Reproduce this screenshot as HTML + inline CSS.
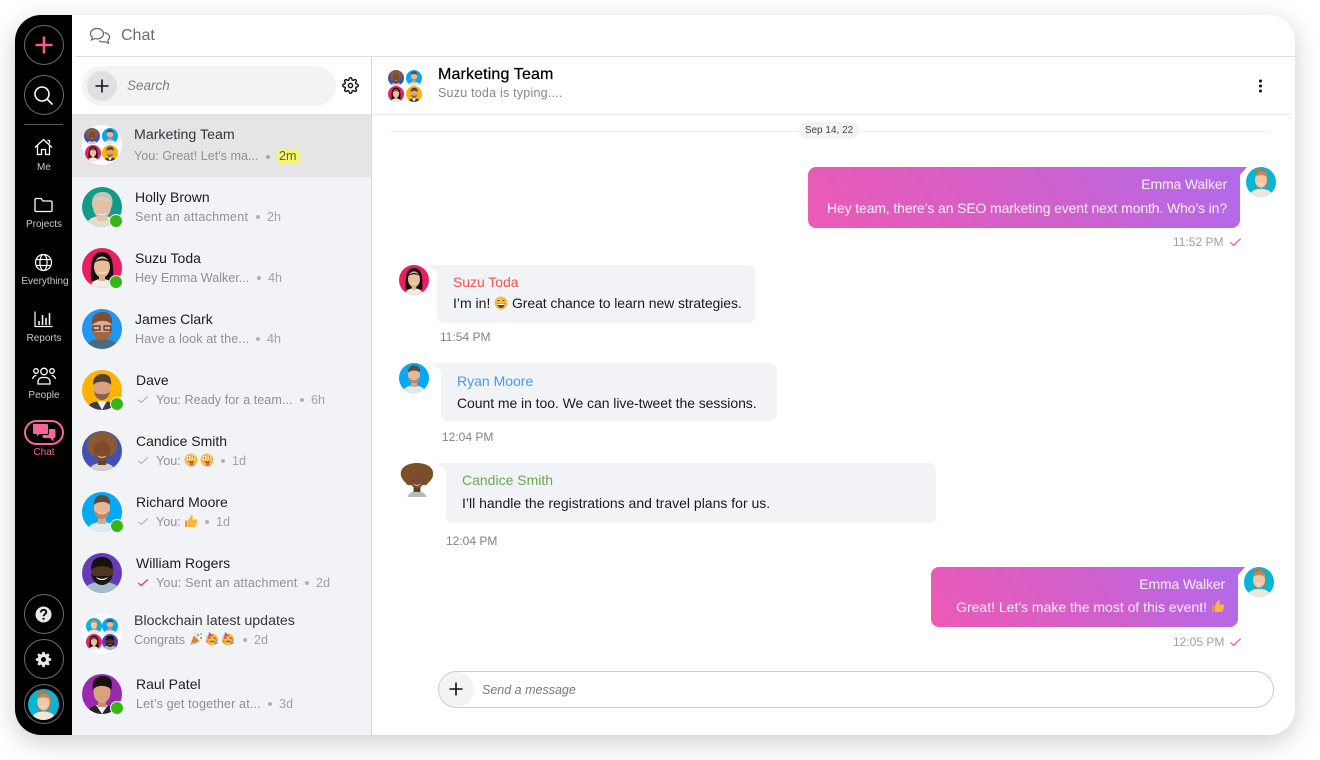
<!DOCTYPE html>
<html lang="en"><head><meta charset="utf-8"><title>Chat</title>
<style>
html,body{margin:0;padding:0;background:#fff;width:1320px;height:760px;overflow:hidden}
body{font-family:"Liberation Sans",sans-serif;position:relative}
#card{position:absolute;left:15px;top:15px;width:1280px;height:720px;border-radius:26px;background:#fff;box-shadow:0 7px 26px rgba(0,0,0,.2)}
#clip{position:absolute;left:0;top:0;width:1280px;height:720px;border-radius:26px;overflow:hidden}
.abs,.t,svg.i,svg.av{position:absolute}
#root{position:absolute;left:-15px;top:-15px;width:1320px;height:760px}
.t{white-space:nowrap;line-height:20px;height:20px}
.n{font-size:14px;color:#1d1d1f}
.s{font-size:12.6px;color:#8f9195}
.g{font-size:12.6px;color:#a0a2a6}
.l{font-size:10px;color:#c9c9c9;text-align:center;width:57px;left:15.5px}
.b{position:absolute;background:#f2f3f7;border-radius:7px}
.me{position:absolute;border-radius:8px 0 8px 8px;background:linear-gradient(58deg,#ec5ab5,#cf60cc 55%,#b06bec)}
.m{font-size:14px;color:#1b1b1d}
.w{font-size:14px;color:#fdeefc;text-align:right}
.tm{font-size:12px;color:#808285}
.ring{position:absolute;width:38px;height:38px;border:1px solid #6c6c6c;border-radius:50%;left:23.5px}
.on{position:absolute;width:12px;height:12px;border-radius:50%;background:#38b515;border:1.5px solid #f2f3f6}
</style></head><body>
<svg width="0" height="0" style="position:absolute"><defs>
<clipPath id="c"><circle cx="20" cy="20" r="20"/></clipPath>
<symbol id="holly" viewBox="0 0 40 40"><g clip-path="url(#c)"><rect width="40" height="40" fill="#109c89"/><path d="M4 40c1-9 8-11 16-11s15 2 16 11z" fill="#e6dccd"/><path d="M10 19C9 8 15 5 21 5s11 4 9 14l-1 2H11z" fill="#c8c3b8"/><ellipse cx="20" cy="20" rx="9" ry="11" fill="#e5c0a7"/><path d="M11 16c2-5 6-6 9-6s8 1 9 6c-5-4-12-4-18 0z" fill="#d3cec4"/><path d="M15 26c3 2 7 2 10 0-2 3-8 3-10 0z" fill="#fff"/><rect x="15" y="29" width="10" height="5" fill="#dcc9b2"/></g></symbol>
<symbol id="suzu" viewBox="0 0 40 40"><g clip-path="url(#c)"><rect width="40" height="40" fill="#e91e63"/><path d="M9 33C8 14 10 4 20 4s12 10 11 29z" fill="#141012"/><path d="M8 40c1-7 7-9 12-9s11 2 12 9z" fill="#efece6"/><ellipse cx="20" cy="19" rx="8" ry="10.500" fill="#e9bd98"/><rect x="17" y="26" width="6" height="7" fill="#e3b28d"/><path d="M15 23c3 2.500 7 2.500 10 0-2 3.500-8 3.500-10 0z" fill="#fff"/><path d="M12 15c3-5 12-7 16 0-3-3-11-4-16 0z" fill="#141012"/></g></symbol>
<symbol id="james" viewBox="0 0 40 40"><g clip-path="url(#c)"><rect width="40" height="40" fill="#2196f3"/><path d="M3 40c2-8 9-10 17-10s15 2 17 10z" fill="#4e6a7e"/><ellipse cx="20" cy="18" rx="10" ry="12.500" fill="#e3ad8c"/><path d="M10 20c1 8 5 11 10 11s9-3 10-11c-2 3-4 3-10 3s-8 0-10-3z" fill="#a9643a"/><path d="M10 16C9 6 15 3 21 3s10 4 9 13c-3-5-14-6-20 0z" fill="#7c5030"/><path d="M11 17h7v4h-7zM22 17h7v4h-7z" fill="none" stroke="#333" stroke-width="1.200"/></g></symbol>
<symbol id="dave" viewBox="0 0 40 40"><g clip-path="url(#c)"><rect width="40" height="40" fill="#ffb300"/><path d="M4 40c2-7 9-9 16-9s14 2 16 9z" fill="#3a3e42"/><path d="M15 31h10l-5 9z" fill="#eee"/><ellipse cx="20" cy="19" rx="8.500" ry="11" fill="#d9a27f"/><path d="M12 21c1 6 4 9 8 9s7-3 8-9c-2 3-4 3-8 3s-6 0-8-3z" fill="#8c6244"/><path d="M11 15C11 6 16 4 21 4s9 3 8 11c-3-4-13-5-18 0z" fill="#54402e"/></g></symbol>
<symbol id="candice" viewBox="0 0 40 40"><g clip-path="url(#c)"><rect width="40" height="40" fill="#3f51b5"/><path d="M20 1c10 0 15 6 15 13 0 6-3 9-6 11H11c-3-2-6-5-6-11C5 7 10 1 20 1z" fill="#8a5a32"/><path d="M7 40c1-6 7-8 13-8s12 2 13 8z" fill="#d3d1c9"/><rect x="16" y="26" width="8" height="8" fill="#6d4128"/><ellipse cx="20" cy="20" rx="8" ry="10" fill="#7d4a2c"/><path d="M15 24c3 2.500 7 2.500 10 0-2 3.500-8 3.500-10 0z" fill="#fff"/></g></symbol>
<symbol id="candice2" viewBox="0 0 40 40"><path d="M20 0c11 0 20 5 19 14-1 6-5 8-8 12H9C6 22 2 20 1 14 0 5 9 0 20 0z" fill="#7a5029"/><path d="M9 40c1-5 6-7 11-7s10 2 11 7z" fill="#b9bcb6"/><rect x="16" y="26" width="8" height="8" fill="#5d3821"/><ellipse cx="20" cy="20" rx="8" ry="10" fill="#7d4a2c"/><path d="M15 24c3 2.500 7 2.500 10 0-2 3.500-8 3.500-10 0z" fill="#fff"/></symbol>
<symbol id="richard" viewBox="0 0 40 40"><g clip-path="url(#c)"><rect width="40" height="40" fill="#03a9f4"/><path d="M4 40c2-8 9-10 16-10s14 2 16 10z" fill="#dfe9f0"/><rect x="16" y="25" width="8" height="7" fill="#dca888"/><ellipse cx="20" cy="16" rx="8" ry="10.500" fill="#e6b799"/><path d="M12 18c1 6 4 9 8 9s7-3 8-9c-2 3-4 3-8 3s-6 0-8-3z" fill="#b58a70"/><path d="M15 20c3 2 7 2 10 0-2 3-8 3-10 0z" fill="#fff"/><path d="M12 13c0-8 4-10 8-10s9 2 8 10c-3-4-12-4-16 0z" fill="#5d4a3c"/></g></symbol>
<symbol id="william" viewBox="0 0 40 40"><g clip-path="url(#c)"><rect width="40" height="40" fill="#673ab7"/><path d="M1 40c2-9 10-11 19-11s17 2 19 11z" fill="#a7bcc8"/><ellipse cx="20" cy="18" rx="11" ry="13" fill="#523425"/><path d="M9 17C9 7 14 4 20 4s11 3 11 13c-4-5-18-5-22 0z" fill="#16110e"/><path d="M9 20c1 8 6 12 11 12s10-4 11-12c-2 4-5 3-11 3s-9 1-11-3z" fill="#1d1512"/><path d="M14 24c4 2.500 8 2.500 12 0-2 4-10 4-12 0z" fill="#fff"/></g></symbol>
<symbol id="raul" viewBox="0 0 40 40"><g clip-path="url(#c)"><rect width="40" height="40" fill="#9c27b0"/><path d="M4 40c2-7 9-9 16-9s14 2 16 9z" fill="#22252a"/><path d="M14 31h12l-6 9z" fill="#f4f4f4"/><rect x="16" y="25" width="8" height="8" fill="#c48f6c"/><ellipse cx="20" cy="18" rx="8.500" ry="11" fill="#d7a27d"/><path d="M11 16C9 5 15 2 21 2s11 3 8 14c-2-5-15-6-18 0z" fill="#15110f"/></g></symbol>
<symbol id="emma" viewBox="0 0 40 40"><g clip-path="url(#c)"><rect width="40" height="40" fill="#06b6d4"/><path d="M13 3c9-4 18 3 17 15l-3 10H13z" fill="#a87e56"/><path d="M3 40c2-8 10-11 17-11s15 3 17 11z" fill="#efe8da"/><ellipse cx="20" cy="17" rx="8" ry="10.500" fill="#efc8ab"/><path d="M12 13c2-7 10-9 16-4 1 2 1 3 0 4-5-3-11-3-16 0z" fill="#b88d62"/><path d="M16 21c2.500 2 6 2 8 0-1.500 3-6.500 3-8 0z" fill="#fff"/></g></symbol>
<symbol id="gear" viewBox="0 0 24 24"><circle cx="12" cy="12" r="3"/><path d="M19.4 15a1.650 1.650 0 0 0 .33 1.820l.06.06a2 2 0 0 1 0 2.830 2 2 0 0 1-2.830 0l-.06-.06a1.650 1.650 0 0 0-1.820-.33 1.650 1.650 0 0 0-1 1.510V21a2 2 0 0 1-2 2 2 2 0 0 1-2-2v-.09A1.650 1.650 0 0 0 9 19.400a1.650 1.650 0 0 0-1.820.33l-.06.06a2 2 0 0 1-2.830 0 2 2 0 0 1 0-2.830l.06-.06a1.650 1.650 0 0 0 .33-1.820 1.650 1.650 0 0 0-1.510-1H3a2 2 0 0 1-2-2 2 2 0 0 1 2-2h.09A1.650 1.650 0 0 0 4.600 9a1.650 1.650 0 0 0-.33-1.820l-.06-.06a2 2 0 0 1 0-2.830 2 2 0 0 1 2.830 0l.06.06a1.650 1.650 0 0 0 1.820.33H9a1.650 1.650 0 0 0 1-1.510V3a2 2 0 0 1 2-2 2 2 0 0 1 2 2v.09a1.650 1.650 0 0 0 1 1.510 1.650 1.650 0 0 0 1.820-.33l.06-.06a2 2 0 0 1 2.830 0 2 2 0 0 1 0 2.830l-.06.06a1.650 1.650 0 0 0-.33 1.820V9a1.650 1.650 0 0 0 1.510 1H21a2 2 0 0 1 2 2 2 2 0 0 1-2 2h-.09a1.650 1.650 0 0 0-1.510 1z"/></symbol>
<symbol id="chk" viewBox="0 0 14 10"><path d="M1.500 5.500L5 8.500 12.500 1.500" fill="none" stroke="currentColor" stroke-width="1.400"/></symbol>
<symbol id="joy" viewBox="0 0 14 14"><circle cx="7" cy="7" r="6.500" fill="#f6bd45"/><path d="M3.500 4.500h2M8.500 4.500h2" stroke="#6b4a1e" stroke-width="1.100"/><path d="M3 7h8c0 3-2 5-4 5S3 10 3 7z" fill="#7a3b22"/><path d="M3.500 7.500h7v1.500h-7z" fill="#fff"/></symbol>
<symbol id="zany" viewBox="0 0 14 14"><circle cx="7" cy="7" r="6.500" fill="#f6bd45"/><circle cx="4.500" cy="5" r="1.900" fill="#fff"/><circle cx="9.500" cy="4" r="1.500" fill="#fff"/><circle cx="4.500" cy="5" r=".8" fill="#333"/><circle cx="9.500" cy="4" r=".7" fill="#333"/><path d="M4 8.500h6c0 1-.8 2-3 2z" fill="#7a3b22"/><path d="M6 9.500h3.500v2.500c0 1.500-3.500 1.500-3.500 0z" fill="#ec5d7b"/></symbol>
<symbol id="thumb" viewBox="0 0 14 14"><path d="M1 6.500h2.500V13H1z" fill="#e59a28"/><path d="M4 6.500L7 1.500c1.500-.5 2 .7 1.700 2L8.300 5.500h3.700c1.500 0 1.500 2 .5 2.300.8.600.5 1.800-.2 2 .4.800 0 1.600-.7 1.800.2.800-.3 1.400-1.100 1.400H6c-1 0-2-.5-2-.5z" fill="#f6b73c"/></symbol>
<symbol id="party" viewBox="0 0 14 14"><circle cx="7" cy="7.500" r="6" fill="#f6bd45"/><path d="M4 0l5 4-6 1z" fill="#d84fa0"/><path d="M3 6h2.500M8.500 6H11" stroke="#6b4a1e" stroke-width="1"/><path d="M5 10c1.500-1 3-1 4 0" stroke="#6b4a1e" fill="none"/><path d="M9.500 9.500l4 1.500-3.500 1.500z" fill="#5b8ef0"/><circle cx="2.500" cy="9.500" r="1.300" fill="#ef7a5a"/><circle cx="11.500" cy="8" r="1.200" fill="#ef7a5a"/></symbol>
<symbol id="cone" viewBox="0 0 14 14"><path d="M1 13L5 3l6 6z" fill="#e7a73d"/><path d="M3 8l3.500 3.500M4 5.500l4.500 4.500" stroke="#c9563c"/><circle cx="9" cy="3" r="1" fill="#e94f8c"/><circle cx="12" cy="6" r="1" fill="#4d8ff0"/><circle cx="12" cy="2" r=".9" fill="#6dbf4b"/><circle cx="6.500" cy="1.500" r=".8" fill="#f0c040"/></symbol>
</defs></svg>

<div id="card"><div id="clip"><div id="root">
<!-- panels -->
<div class="abs" style="left:15px;top:15px;width:57px;height:720px;background:#000"></div>
<div class="abs" style="left:72px;top:57px;width:299px;height:678px;background:#f2f3f6"></div>
<div class="abs" style="left:72px;top:57px;width:299px;height:57px;background:#fff"></div>
<div class="abs" style="left:72px;top:114px;width:299px;height:63px;background:#e5e5e6"></div>
<div class="abs" style="left:371px;top:57px;width:1px;height:678px;background:#d9d9d9"></div>
<div class="abs" style="left:75px;top:56px;width:1220px;height:1px;background:#dedede"></div>
<div class="abs" style="left:372px;top:114px;width:918px;height:1px;background:#e4e4e4"></div>

<!-- top bar -->
<svg class="i" style="left:89px;top:27px" width="22" height="18" viewBox="0 0 22 18" fill="none" stroke="#666" stroke-width="1.200"><path d="M8 1.500c3.700 0 6.500 2.300 6.500 5.200s-2.800 5.200-6.500 5.200c-.8 0-1.500-.1-2.200-.3L2.500 13l.8-3C2 9.100 1.500 8 1.500 6.700 1.500 3.800 4.300 1.500 8 1.500z"/><path d="M15.500 5.500c2.900.6 5 2.500 5 4.600 0 1.200-.6 2.200-1.600 3l.6 3.200-3.300-1.600c-2.200.5-4.500.2-6.200-1"/></svg>
<div class="t" style="left:121px;top:26px;font-size:16px;color:#6a6a6a">Chat</div>

<!-- sidebar -->
<div class="ring" style="top:25px"></div>
<svg class="i" style="left:34px;top:35px" width="20" height="20" viewBox="0 0 20 20"><path d="M10 1.500v17M1.500 10h17" stroke="#f4607f" stroke-width="2.600"/></svg>
<div class="ring" style="top:75px"></div>
<svg class="i" style="left:33px;top:85px" width="21" height="21" viewBox="0 0 21 21" fill="none" stroke="#fff" stroke-width="1.600"><circle cx="9" cy="9" r="7"/><path d="M14 14l5.500 5.500"/></svg>
<div class="abs" style="left:24px;top:124px;width:39px;height:1px;background:#555"></div>

<svg class="i" style="left:34px;top:138px" width="19" height="18" viewBox="0 0 19 18" fill="none" stroke="#fff" stroke-width="1.300"><path d="M1 9.500L9.500 1.500 18 9.500"/><path d="M3.500 7.500v9h4v-5h4v5h4v-9"/><path d="M13.500 2.500h2v3"/></svg>
<div class="t l" style="top:158px">Me</div>
<svg class="i" style="left:34px;top:197px" width="19" height="16" viewBox="0 0 19 16" fill="none" stroke="#fff" stroke-width="1.300"><path d="M1 2.500a1 1 0 0 1 1-1h5l2 2.500h8a1 1 0 0 1 1 1v8.500a1 1 0 0 1-1 1H2a1 1 0 0 1-1-1z"/></svg>
<div class="t l" style="top:215px">Projects</div>
<svg class="i" style="left:34px;top:253px" width="19" height="19" viewBox="0 0 19 19" fill="none" stroke="#fff" stroke-width="1.200"><circle cx="9.500" cy="9.500" r="8"/><ellipse cx="9.500" cy="9.500" rx="3.600" ry="8"/><path d="M2.200 6.500h14.600M2.200 12.500h14.600"/></svg>
<div class="t l" style="top:272px;left:16.500px">Everything</div>
<svg class="i" style="left:34px;top:311px" width="19" height="17" viewBox="0 0 19 17" fill="none" stroke="#fff"><path d="M1 .5V15.500H18.500" stroke-width="1.200"/><path d="M5 14v-4M8.500 14V4M12 14V7M15.500 14V2" stroke-width="1.500"/></svg>
<div class="t l" style="top:329px">Reports</div>
<svg class="i" style="left:32px;top:367px" width="24" height="18" viewBox="0 0 24 18" fill="none" stroke="#fff" stroke-width="1.300"><circle cx="12" cy="4.500" r="3.300"/><circle cx="4" cy="4" r="2.300"/><circle cx="20" cy="4" r="2.300"/><path d="M6 17v-2.500c0-2.200 2-4 4-4h4c2 0 4 1.800 4 4V17z"/><path d="M.8 12c0-2 1.500-3.500 3.500-3.500M23.200 12c0-2-1.500-3.500-3.500-3.500"/></svg>
<div class="t l" style="top:386px">People</div>
<div class="abs" style="left:23.500px;top:420px;width:36px;height:21px;border:2px solid #f6659c;border-radius:13px"></div>
<svg class="i" style="left:32px;top:423px" width="24" height="19" viewBox="0 0 24 19"><path d="M12 6h10a1.500 1.500 0 0 1 1.500 1.500v6A1.500 1.500 0 0 1 22 15h-.5v3.500L18 15h-6a1.500 1.500 0 0 1-1.500-1.500v-6A1.500 1.500 0 0 1 12 6z" fill="#f6659c"/><path d="M2 .5h13A1.500 1.500 0 0 1 16.500 2v8a1.500 1.500 0 0 1-1.500 1.500H7.500L4.500 15v-3.500H2A1.500 1.500 0 0 1 .5 10V2A1.500 1.500 0 0 1 2 .5z" fill="#f6659c" stroke="#000" stroke-width="1"/></svg>
<div class="t l" style="top:443px;color:#f6659c">Chat</div>

<div class="ring" style="top:594px"></div>
<svg class="i" style="left:35px;top:606px" width="17" height="17" viewBox="0 0 17 17"><circle cx="8.500" cy="8.500" r="8" fill="#e8e8e8"/><path d="M5.800 6.500c0-1.700 1.200-2.700 2.800-2.700s2.700 1 2.700 2.400c0 2-2.700 2-2.700 3.900" fill="none" stroke="#000" stroke-width="1.800"/><circle cx="8.600" cy="12.800" r="1.100" fill="#000"/></svg>
<div class="ring" style="top:639px"></div>
<svg class="i" style="left:35px;top:651px" width="17" height="17" viewBox="0 0 24 24" fill="#e8e8e8"><path d="M19.400 15a1.650 1.650 0 0 0 .33 1.820l.06.06a2 2 0 0 1 0 2.830 2 2 0 0 1-2.830 0l-.06-.06a1.650 1.650 0 0 0-1.820-.33 1.650 1.650 0 0 0-1 1.510V21a2 2 0 0 1-2 2 2 2 0 0 1-2-2v-.09A1.650 1.650 0 0 0 9 19.400a1.650 1.650 0 0 0-1.820.33l-.06.06a2 2 0 0 1-2.830 0 2 2 0 0 1 0-2.830l.06-.06a1.650 1.650 0 0 0 .33-1.820 1.650 1.650 0 0 0-1.510-1H3a2 2 0 0 1-2-2 2 2 0 0 1 2-2h.09A1.650 1.650 0 0 0 4.600 9a1.650 1.650 0 0 0-.33-1.820l-.06-.06a2 2 0 0 1 0-2.830 2 2 0 0 1 2.830 0l.06.06a1.650 1.650 0 0 0 1.820.33H9a1.650 1.650 0 0 0 1-1.510V3a2 2 0 0 1 2-2 2 2 0 0 1 2 2v.09a1.650 1.650 0 0 0 1 1.510 1.650 1.650 0 0 0 1.820-.33l.06-.06a2 2 0 0 1 2.830 0 2 2 0 0 1 0 2.830l-.06.06a1.650 1.650 0 0 0-.33 1.820V9a1.650 1.650 0 0 0 1.510 1H21a2 2 0 0 1 2 2 2 2 0 0 1-2 2h-.09a1.650 1.650 0 0 0-1.510 1z"/><circle cx="12" cy="12" r="3.500" fill="#000"/></svg>
<div class="ring" style="top:684px"></div>
<svg class="av" style="left:28px;top:689px" width="31" height="31"><use href="#emma"/></svg>

<!-- search -->
<div class="abs" style="left:82px;top:66px;width:254px;height:40px;border-radius:20px;background:#f2f3f5"></div>
<div class="abs" style="left:87px;top:71px;width:30px;height:30px;border-radius:50%;background:#dfe0e3"></div>
<svg class="i" style="left:95px;top:79px" width="14" height="14" viewBox="0 0 14 14"><path d="M7 .5v13M.5 7h13" stroke="#111" stroke-width="1.600"/></svg>
<div class="t" style="left:127px;top:76px;font-size:13.500px;font-style:italic;color:#7d7f83">Search</div>
<svg class="i" style="left:342px;top:77px" width="17" height="17" fill="none" stroke="#111" stroke-width="2"><use href="#gear"/></svg>

<!-- list -->
<div class="abs" style="left:82px;top:125px;width:40px;height:40px;border-radius:50%;background:#fff"></div>
<svg class="av" style="left:84px;top:128px" width="16" height="16"><use href="#candice"/></svg>
<svg class="av" style="left:102px;top:128px" width="16" height="16"><use href="#richard"/></svg>
<svg class="av" style="left:85px;top:145px" width="16" height="16"><use href="#suzu"/></svg>
<svg class="av" style="left:102px;top:145px" width="16" height="16"><use href="#dave"/></svg>
<div class="t n" style="left:134px;top:125px;color:#35353a;font-size:14.200px">Marketing Team</div>
<div class="t s" style="left:134px;top:146px">You: Great! Let's ma...</div>
<div class="abs" style="left:266px;top:155px;width:4px;height:4px;border-radius:50%;background:#a6a8ab"></div>
<div class="abs" style="left:277px;top:150px;width:22px;height:13px;background:#f7f56b"></div>
<div class="t s" style="left:279px;top:146px;color:#5c5c40;font-size:12.600px">2m</div>

<svg class="av" style="left:82px;top:187px" width="40" height="40"><use href="#holly"/></svg>
<div class="on" style="left:109px;top:214px"></div>
<div class="t n" style="left:135px;top:187px">Holly Brown</div>
<div class="t s" style="left:135px;top:207px;letter-spacing:.22px">Sent an attachment</div>
<div class="abs" style="left:256px;top:215px;width:4px;height:4px;border-radius:50%;background:#b0b2b5"></div>
<div class="t g" style="left:267px;top:207px">2h</div>

<svg class="av" style="left:82px;top:248px" width="40" height="40"><use href="#suzu"/></svg>
<div class="on" style="left:109px;top:275px"></div>
<div class="t n" style="left:135px;top:248px">Suzu Toda</div>
<div class="t s" style="left:135px;top:268px">Hey Emma Walker...</div>
<div class="abs" style="left:257px;top:276px;width:4px;height:4px;border-radius:50%;background:#b0b2b5"></div>
<div class="t g" style="left:268px;top:268px">4h</div>

<svg class="av" style="left:82px;top:309px" width="40" height="40"><use href="#james"/></svg>
<div class="t n" style="left:135px;top:309px">James Clark</div>
<div class="t s" style="left:135px;top:329px;letter-spacing:.1px">Have a look at the...</div>
<div class="abs" style="left:256px;top:337px;width:4px;height:4px;border-radius:50%;background:#b0b2b5"></div>
<div class="t g" style="left:267px;top:329px">4h</div>

<svg class="av" style="left:82px;top:370px" width="40" height="40"><use href="#dave"/></svg>
<div class="on" style="left:110px;top:397px"></div>
<div class="t n" style="left:136px;top:370px">Dave</div>
<svg class="i" style="left:137px;top:395px;color:#b3b5b8" width="12" height="9"><use href="#chk"/></svg>
<div class="t s" style="left:156px;top:390px;letter-spacing:.05px">You: Ready for a team...</div>
<div class="abs" style="left:300px;top:398px;width:4px;height:4px;border-radius:50%;background:#b0b2b5"></div>
<div class="t g" style="left:311px;top:390px">6h</div>

<svg class="av" style="left:82px;top:431px" width="40" height="40"><use href="#candice"/></svg>
<div class="t n" style="left:136px;top:431px">Candice Smith</div>
<svg class="i" style="left:137px;top:456px;color:#b3b5b8" width="12" height="9"><use href="#chk"/></svg>
<div class="t s" style="left:156px;top:451px">You:</div>
<svg class="i" style="left:184px;top:453px" width="14" height="14"><use href="#zany"/></svg>
<svg class="i" style="left:200px;top:453px" width="14" height="14"><use href="#zany"/></svg>
<div class="abs" style="left:221px;top:459px;width:4px;height:4px;border-radius:50%;background:#b0b2b5"></div>
<div class="t g" style="left:232px;top:451px">1d</div>

<svg class="av" style="left:82px;top:492px" width="40" height="40"><use href="#richard"/></svg>
<div class="on" style="left:110px;top:519px"></div>
<div class="t n" style="left:136px;top:492px">Richard Moore</div>
<svg class="i" style="left:137px;top:517px;color:#b3b5b8" width="12" height="9"><use href="#chk"/></svg>
<div class="t s" style="left:156px;top:512px">You:</div>
<svg class="i" style="left:184px;top:514px" width="14" height="14"><use href="#thumb"/></svg>
<div class="abs" style="left:205px;top:520px;width:4px;height:4px;border-radius:50%;background:#b0b2b5"></div>
<div class="t g" style="left:216px;top:512px">1d</div>

<svg class="av" style="left:82px;top:553px" width="40" height="40"><use href="#william"/></svg>
<div class="t n" style="left:136px;top:553px">William Rogers</div>
<svg class="i" style="left:137px;top:578px;color:#ea2f63" width="12" height="9"><use href="#chk"/></svg>
<div class="t s" style="left:156px;top:573px;letter-spacing:.17px">You: Sent an attachment</div>
<div class="abs" style="left:305px;top:581px;width:4px;height:4px;border-radius:50%;background:#b0b2b5"></div>
<div class="t g" style="left:316px;top:573px">2d</div>

<div class="abs" style="left:82px;top:614px;width:40px;height:40px;border-radius:50%;background:#fff"></div>
<svg class="av" style="left:86px;top:618px" width="16" height="16"><use href="#emma"/></svg>
<svg class="av" style="left:102px;top:618px" width="16" height="16"><use href="#richard"/></svg>
<svg class="av" style="left:86px;top:634px" width="16" height="16"><use href="#suzu"/></svg>
<svg class="av" style="left:102px;top:634px" width="16" height="16"><use href="#william"/></svg>
<div class="t n" style="left:134px;top:611px;color:#35353a;font-size:14.200px">Blockchain latest updates</div>
<div class="t s" style="left:134px;top:630px">Congrats</div>
<svg class="i" style="left:189px;top:632px" width="14" height="14"><use href="#cone"/></svg>
<svg class="i" style="left:205px;top:632px" width="14" height="14"><use href="#party"/></svg>
<svg class="i" style="left:221px;top:632px" width="14" height="14"><use href="#party"/></svg>
<div class="abs" style="left:243px;top:638px;width:4px;height:4px;border-radius:50%;background:#b0b2b5"></div>
<div class="t g" style="left:254px;top:630px">2d</div>

<svg class="av" style="left:82px;top:674px" width="40" height="40"><use href="#raul"/></svg>
<div class="on" style="left:110px;top:701px"></div>
<div class="t n" style="left:136px;top:674px">Raul Patel</div>
<div class="t s" style="left:136px;top:694px;letter-spacing:.13px">Let’s get together at...</div>
<div class="abs" style="left:268px;top:702px;width:4px;height:4px;border-radius:50%;background:#b0b2b5"></div>
<div class="t g" style="left:279px;top:694px">3d</div>

<!-- chat header -->
<svg class="av" style="left:388px;top:70px" width="16" height="16"><use href="#candice"/></svg>
<svg class="av" style="left:406px;top:70px" width="16" height="16"><use href="#richard"/></svg>
<svg class="av" style="left:388px;top:86px" width="16" height="16"><use href="#suzu"/></svg>
<svg class="av" style="left:406px;top:86px" width="16" height="16"><use href="#dave"/></svg>
<div class="t" style="left:438px;top:65px;font-size:16px;letter-spacing:.14px;color:#000;-webkit-text-stroke:.25px #000">Marketing Team</div>
<div class="t" style="left:438px;top:83px;font-size:12.500px;letter-spacing:.22px;color:#85878b">Suzu toda is typing....</div>
<svg class="i" style="left:1258px;top:79px" width="5" height="14"><circle cx="2.500" cy="2" r="1.500" fill="#111"/><circle cx="2.500" cy="7" r="1.500" fill="#111"/><circle cx="2.500" cy="12" r="1.500" fill="#111"/></svg>

<!-- date -->
<div class="abs" style="left:390px;top:131px;width:880px;height:1px;background:#efefef"></div>
<div class="abs" style="left:799px;top:122px;width:60px;height:17px;border-radius:9px;background:#f2f3f4"></div>
<div class="t" style="left:799px;top:121px;width:60px;text-align:center;font-size:10px;color:#444">Sep 14, 22</div>

<!-- msg 1 -->
<div class="me" style="left:808px;top:167px;width:432px;height:61px"></div>
<svg class="i" style="left:1238px;top:167px" width="10" height="10"><path d="M0 0h9L2 8 0 8z" fill="#b06bec"/></svg>
<svg class="av" style="left:1246px;top:167px" width="30" height="30"><use href="#emma"/></svg>
<div class="t w" style="left:808px;top:174px;width:419px;letter-spacing:-.15px">Emma Walker</div>
<div class="t w" style="left:808px;top:198px;width:419px;letter-spacing:-.13px">Hey team, there’s an SEO marketing event next month. Who’s in?</div>
<div class="t tm" style="left:1173px;top:232px;color:#a0a0a3">11:52 PM</div>
<svg class="i" style="left:1229px;top:237px;color:#f2608f" width="13" height="10"><use href="#chk"/></svg>

<!-- msg 2 -->
<svg class="av" style="left:399px;top:265px" width="30" height="30"><use href="#suzu"/></svg>
<svg class="i" style="left:428px;top:265px" width="10" height="10"><path d="M0 0h10v9z" fill="#f2f3f7"/></svg>
<div class="b" style="left:437px;top:265px;width:318px;height:58px;border-top-left-radius:0"></div>
<div class="t" style="left:453px;top:272px;font-size:14px;color:#ef5350;letter-spacing:-.05px">Suzu Toda</div>
<div class="t m" style="left:453px;top:293px">I’m in!</div>
<svg class="i" style="left:494px;top:296px" width="14" height="14"><use href="#joy"/></svg>
<div class="t m" style="left:512px;top:293px;letter-spacing:-.08px">Great chance to learn new strategies.</div>
<div class="t tm" style="left:440px;top:327px">11:54 PM</div>

<!-- msg 3 -->
<svg class="av" style="left:399px;top:363px" width="30" height="30"><use href="#richard"/></svg>
<svg class="i" style="left:432px;top:363px" width="10" height="10"><path d="M0 0h10v9z" fill="#f2f3f7"/></svg>
<div class="b" style="left:441px;top:363px;width:336px;height:58px;border-top-left-radius:0"></div>
<div class="t" style="left:457px;top:371px;font-size:14px;color:#3f9bf5">Ryan Moore</div>
<div class="t m" style="left:457px;top:393px;letter-spacing:-.06px">Count me in too. We can live-tweet the sessions.</div>
<div class="t tm" style="left:442px;top:427px">12:04 PM</div>

<!-- msg 4 -->
<svg class="av" style="left:400px;top:463px" width="34" height="34"><use href="#candice2"/></svg>
<svg class="i" style="left:437px;top:463px" width="10" height="10"><path d="M0 0h10v9z" fill="#f2f3f7"/></svg>
<div class="b" style="left:446px;top:463px;width:490px;height:60px;border-top-left-radius:0"></div>
<div class="t" style="left:462px;top:470px;font-size:14px;color:#6aa84f">Candice Smith</div>
<div class="t m" style="left:462px;top:493px">I’ll handle the registrations and travel plans for us.</div>
<div class="t tm" style="left:446px;top:531px">12:04 PM</div>

<!-- msg 5 -->
<div class="me" style="left:931px;top:567px;width:307px;height:60px"></div>
<svg class="i" style="left:1236px;top:567px" width="10" height="10"><path d="M0 0h9L2 8 0 8z" fill="#b06bec"/></svg>
<svg class="av" style="left:1244px;top:567px" width="30" height="30"><use href="#emma"/></svg>
<div class="t w" style="left:931px;top:574px;width:294px;letter-spacing:-.15px">Emma Walker</div>
<div class="t w" style="left:931px;top:597px;width:276px">Great! Let's make the most of this event!</div>
<svg class="i" style="left:1211px;top:599px" width="14" height="14"><use href="#thumb"/></svg>
<div class="t tm" style="left:1173px;top:632px;color:#a0a0a3">12:05 PM</div>
<svg class="i" style="left:1229px;top:637px;color:#f2608f" width="13" height="10"><use href="#chk"/></svg>

<!-- input -->
<div class="abs" style="left:438px;top:671px;width:834px;height:35px;border:1px solid #cbcbcb;border-radius:19px;background:#fff"></div>
<div class="abs" style="left:439px;top:672px;width:35px;height:35px;border-radius:50%;background:#f2f3f5"></div>
<svg class="i" style="left:449px;top:682px" width="14" height="14" viewBox="0 0 14 14"><path d="M7 .5v13M.5 7h13" stroke="#111" stroke-width="1.600"/></svg>
<div class="t" style="left:482px;top:680px;font-size:12.500px;font-style:italic;color:#77797d">Send a message</div>
</div></div></div>
</body></html>
